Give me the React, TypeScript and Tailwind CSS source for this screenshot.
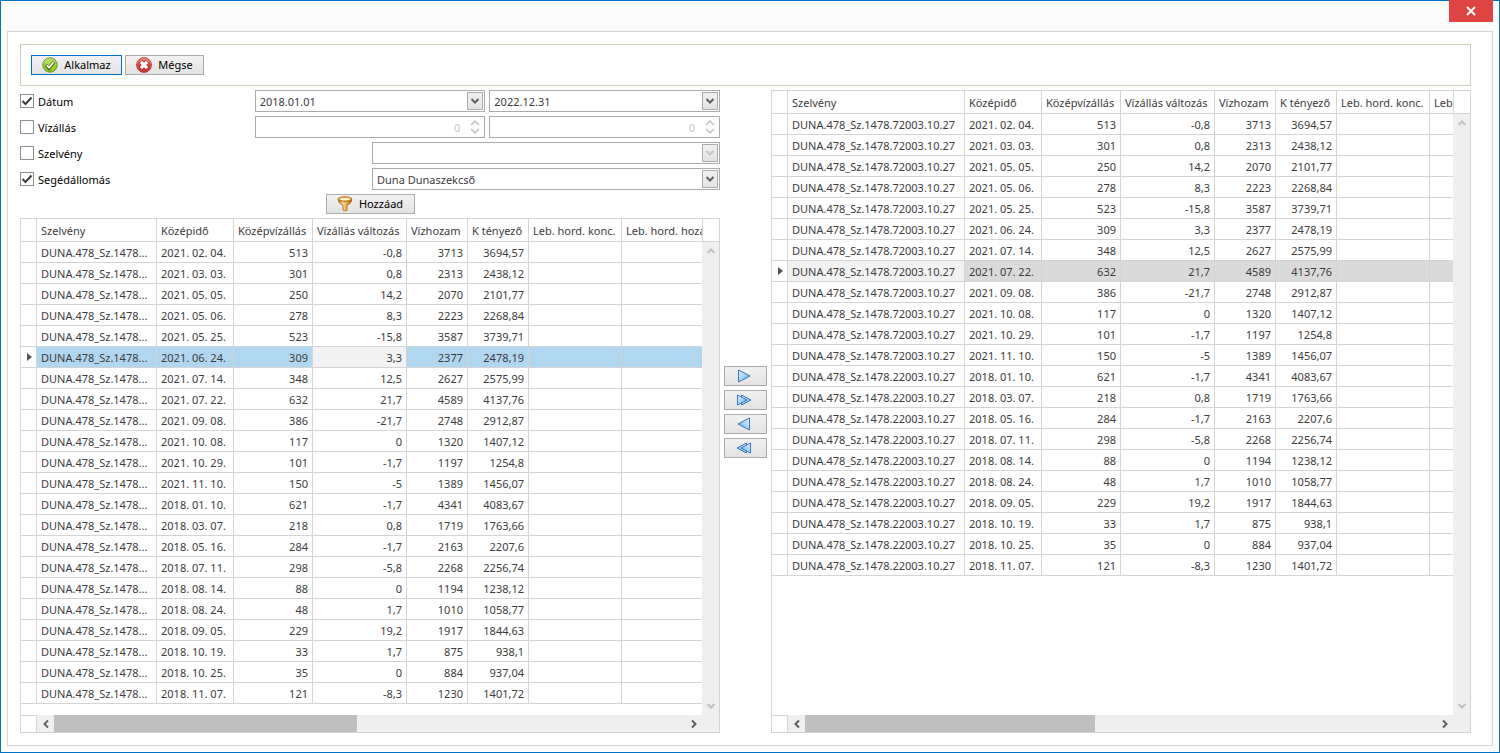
import { useState } from 'react'
import type { ReactNode } from 'react'
import clsx from 'clsx'

interface Measurement {
  station: string
  date: string
  level: string
  change: string
  flow: string
  factor: string
}

const OLD_STATION = 'DUNA.478_Sz.1478.22003.10.27'
const NEW_STATION = 'DUNA.478_Sz.1478.72003.10.27'

const HEADERS = [
  'Szelvény',
  'Középidő',
  'Középvízállás',
  'Vízállás változás',
  'Vízhozam',
  'K tényező',
  'Leb. hord. konc.',
  'Leb. hord. hozam',
]

const ROWS: Measurement[] = [
  ['2021. 02. 04.', '513', '-0,8', '3713', '3694,57'],
  ['2021. 03. 03.', '301', '0,8', '2313', '2438,12'],
  ['2021. 05. 05.', '250', '14,2', '2070', '2101,77'],
  ['2021. 05. 06.', '278', '8,3', '2223', '2268,84'],
  ['2021. 05. 25.', '523', '-15,8', '3587', '3739,71'],
  ['2021. 06. 24.', '309', '3,3', '2377', '2478,19'],
  ['2021. 07. 14.', '348', '12,5', '2627', '2575,99'],
  ['2021. 07. 22.', '632', '21,7', '4589', '4137,76'],
  ['2021. 09. 08.', '386', '-21,7', '2748', '2912,87'],
  ['2021. 10. 08.', '117', '0', '1320', '1407,12'],
  ['2021. 10. 29.', '101', '-1,7', '1197', '1254,8'],
  ['2021. 11. 10.', '150', '-5', '1389', '1456,07'],
  ['2018. 01. 10.', '621', '-1,7', '4341', '4083,67'],
  ['2018. 03. 07.', '218', '0,8', '1719', '1763,66'],
  ['2018. 05. 16.', '284', '-1,7', '2163', '2207,6'],
  ['2018. 07. 11.', '298', '-5,8', '2268', '2256,74'],
  ['2018. 08. 14.', '88', '0', '1194', '1238,12'],
  ['2018. 08. 24.', '48', '1,7', '1010', '1058,77'],
  ['2018. 09. 05.', '229', '19,2', '1917', '1844,63'],
  ['2018. 10. 19.', '33', '1,7', '875', '938,1'],
  ['2018. 10. 25.', '35', '0', '884', '937,04'],
  ['2018. 11. 07.', '121', '-8,3', '1230', '1401,72'],
].map(([date, level, change, flow, factor]) => ({
  station: date.startsWith('2021') ? NEW_STATION : OLD_STATION,
  date,
  level,
  change,
  flow,
  factor,
}))

const ROTATION = {
  up: 'rotate-180',
  down: '',
  left: 'rotate-90',
  right: '-rotate-90',
}

function Chevron({ dir }: { dir: keyof typeof ROTATION }) {
  return (
    <svg viewBox="0 0 10 10" className={clsx('size-[10px] shrink-0', ROTATION[dir])} aria-hidden="true">
      <path d="M1.5 3 L5 6.5 L8.5 3" fill="none" stroke="currentColor" strokeWidth="2" />
    </svg>
  )
}

function SpinIcon() {
  return (
    <svg viewBox="0 0 10 14" className="h-[14px] w-[10px] shrink-0" aria-hidden="true">
      <path d="M1 5 L5 1.2 L9 5 M1 9 L5 12.8 L9 9" fill="none" stroke="currentColor" strokeWidth="1.6" />
    </svg>
  )
}

function OkIcon() {
  return (
    <svg viewBox="0 0 16 16" className="size-4 shrink-0" aria-hidden="true">
      <defs>
        <linearGradient id="ok-fill" x1="0" y1="0" x2="0" y2="1">
          <stop offset="0" stopColor="#c3e27a" />
          <stop offset="0.5" stopColor="#a4d63c" />
          <stop offset="1" stopColor="#8cc62a" />
        </linearGradient>
      </defs>
      <circle cx="8" cy="8" r="7.2" fill="url(#ok-fill)" stroke="#64962a" />
      <path d="M3.8 8 L7 11.2 L12 4.8" fill="none" stroke="#4b7a12" strokeWidth="3.6" />
      <path d="M4.6 8.3 L7.1 10.5 L11.5 5.2" fill="none" stroke="#fff" strokeWidth="1.8" />
    </svg>
  )
}

function CancelIcon() {
  return (
    <svg viewBox="0 0 16 16" className="size-4 shrink-0" aria-hidden="true">
      <defs>
        <linearGradient id="cancel-fill" x1="0" y1="0" x2="0" y2="1">
          <stop offset="0" stopColor="#ee9a90" />
          <stop offset="0.5" stopColor="#da4a42" />
          <stop offset="1" stopColor="#c8302c" />
        </linearGradient>
      </defs>
      <circle cx="8" cy="8" r="7.4" fill="url(#cancel-fill)" stroke="#bb4640" />
      <path d="M4.6 4.6 L11.4 11.4 M11.4 4.6 L4.6 11.4" stroke="#a82a26" strokeWidth="4.6" />
      <path d="M4.9 4.9 L11.1 11.1 M11.1 4.9 L4.9 11.1" stroke="#fff" strokeWidth="3.2" />
    </svg>
  )
}

function FunnelIcon() {
  return (
    <svg viewBox="0 0 16 16" className="size-4 shrink-0" aria-hidden="true">
      <defs>
        <linearGradient id="funnel-fill" x1="0" y1="0" x2="1" y2="0">
          <stop offset="0" stopColor="#b8681c" />
          <stop offset="0.35" stopColor="#ffdf9c" />
          <stop offset="0.65" stopColor="#eda136" />
          <stop offset="1" stopColor="#a75712" />
        </linearGradient>
      </defs>
      <path d="M1.2 3 C1.2 6.5 3.5 8 6 9.2 V14.2 Q8 15.6 10 14.2 V9.2 C12.5 8 14.8 6.5 14.8 3 Z" fill="url(#funnel-fill)" stroke="#a45f1d" strokeWidth="0.8" />
      <ellipse cx="8" cy="3" rx="6.8" ry="2.3" fill="#f2b554" stroke="#a45f1d" strokeWidth="0.8" />
      <ellipse cx="8" cy="3.1" rx="4.8" ry="1.2" fill="#fff0cc" />
    </svg>
  )
}

function ArrowIcon({ double = false, back = false }: { double?: boolean; back?: boolean }) {
  const id = `arrow-${double}-${back}`
  return (
    <svg viewBox="0 0 16 16" className={clsx('size-4 shrink-0', back && '-scale-x-100')} aria-hidden="true">
      <defs>
        <linearGradient id={id} x1="0" y1="0" x2="1" y2="1">
          <stop offset="0" stopColor="#e8f5ff" />
          <stop offset="0.6" stopColor="#8ecbf5" />
          <stop offset="1" stopColor="#5aa6e6" />
        </linearGradient>
      </defs>
      {double ? (
        <g fill={`url(#${id})`} stroke="#3f76bf">
          <path d="M5.5 3 L15 8 L5.5 13 Z" />
          <path d="M1.5 3 L11 8 L1.5 13 Z" />
        </g>
      ) : (
        <path d="M2.5 2 L14 8 L2.5 14 Z" fill={`url(#${id})`} stroke="#3f76bf" />
      )}
    </svg>
  )
}

const BUTTON = 'flex h-5 items-center justify-center gap-[6px] border bg-linear-to-b from-[#f1f1f1] to-[#e3e3e3] text-black hover:to-[#d8d8d8]'

function DropBox({ disabled = false }: { disabled?: boolean }) {
  return (
    <span className={clsx(
      'flex h-[18px] w-4 shrink-0 items-center justify-center border border-[#ababab] bg-linear-to-b from-[#f1f1f1] to-[#e3e3e3]',
      disabled ? 'text-[#c4c4c4]' : 'text-[#606060]'
    )}>
      <Chevron dir="down" />
    </span>
  )
}

const FIELD = 'flex h-[22px] min-w-0 items-center border border-[#ababab] bg-white p-px'

function DateField({ label, value }: { label: string; value: string }) {
  return (
    <div className={FIELD}>
      <input aria-label={label} defaultValue={value} className="min-w-0 flex-1 pt-[2px] pl-[3px] outline-none" />
      <button type="button" aria-label={`${label} naptár`}><DropBox /></button>
    </div>
  )
}

function NumberField({ label, enabled }: { label: string; enabled: boolean }) {
  return (
    <div className={clsx(FIELD, 'gap-[10px] pr-1', !enabled && 'text-[#c4c4c4]')}>
      <input
        type="number"
        aria-label={label}
        defaultValue={0}
        disabled={!enabled}
        className="min-w-0 flex-1 appearance-none pt-[2px] text-right outline-none [-moz-appearance:textfield] [&::-webkit-inner-spin-button]:appearance-none"
      />
      <SpinIcon />
    </div>
  )
}

function SelectField({ label, options, disabled = false }: { label: string; options: string[]; disabled?: boolean }) {
  return (
    <div className="relative">
      <select
        aria-label={label}
        disabled={disabled}
        className="block h-[22px] w-full appearance-none border border-[#ababab] bg-white pt-[2px] pr-5 pl-1 outline-none"
      >
        {options.map(o => <option key={o}>{o}</option>)}
      </select>
      <span className="pointer-events-none absolute top-[2px] right-[2px]"><DropBox disabled={disabled} /></span>
    </div>
  )
}

interface FilterRowProps {
  label: string
  checked: boolean
  onChange: (checked: boolean) => void
  wide?: boolean
  children: ReactNode
}

function FilterRow({ label, checked, onChange, wide = false, children }: FilterRowProps) {
  return (
    <div className={clsx('grid items-center gap-1', wide ? 'grid-cols-2' : 'grid-cols-3')}>
      <label className="flex items-center gap-1 text-black">
        <span className="grid size-[14px] place-items-center">
          <input
            type="checkbox"
            checked={checked}
            onChange={e => onChange(e.target.checked)}
            className="col-start-1 row-start-1 size-[14px] appearance-none border border-[#8f8f8f] bg-white"
          />
          {checked && (
            <svg viewBox="0 0 14 14" className="pointer-events-none col-start-1 row-start-1 size-[14px]" aria-hidden="true">
              <path d="M2.5 7 L5.5 10 L11.5 3.5" fill="none" stroke="#3c3c3c" strokeWidth="2" />
            </svg>
          )}
        </span>
        <span className="pt-[2px]">{label}</span>
      </label>
      {children}
    </div>
  )
}

interface DataGridProps {
  label: string
  tableClass: string
  stationClass: string
  thumbClass: string
  initialRow: number
  focusCol: number
  selectedClass: string
  shortStation?: boolean
}

function DataGrid({ label, tableClass, stationClass, thumbClass, initialRow, focusCol, selectedClass, shortStation = false }: DataGridProps) {
  const [current, setCurrent] = useState(initialRow)

  return (
    <div className="flex min-w-0 flex-1 flex-col border border-[#d4d4d4]">
      <div className="flex flex-1">
        <div className="min-w-0 flex-1 overflow-hidden">
          <table aria-label={label} className={clsx('min-w-full table-fixed border-separate border-spacing-0', tableClass)}>
            <colgroup>
              <col className="w-4" />
              <col className={stationClass} />
              <col className="w-[77px]" />
              <col className="w-[79px]" />
              <col className="w-[94px]" />
              <col className="w-[61px]" />
              <col className="w-[61px]" />
              <col className="w-[93px]" />
              <col />
            </colgroup>
            <thead>
              <tr className="h-[23px]">
                <th className="border-r border-b border-[#d4d4d4]" />
                {HEADERS.map(h => (
                  <th key={h} className="overflow-hidden border-r border-b border-[#d4d4d4] px-1 pt-[2px] text-left font-normal whitespace-nowrap">
                    {h}
                  </th>
                ))}
              </tr>
            </thead>
            <tbody>
              {ROWS.map((row, i) => {
                const selected = i === current
                const station = shortStation ? `${row.station.slice(0, 16)}...` : row.station
                const cells = [station, row.date, row.level, row.change, row.flow, row.factor, '', '']
                return (
                  <tr key={row.date} className="h-[21px]" onClick={() => setCurrent(i)}>
                    <td className="border-r border-b border-[#d4d4d4]">
                      {selected && (
                        <svg viewBox="0 0 6 8" className="mx-auto h-2 w-[6px]" aria-hidden="true">
                          <path d="M1 0 L6 4 L1 8 Z" fill="#555" />
                        </svg>
                      )}
                    </td>
                    {cells.map((value, c) => (
                      <td
                        key={c}
                        className={clsx(
                          'overflow-hidden border-r border-b border-[#d4d4d4] px-1 pt-[2px] whitespace-nowrap',
                          c > 1 && 'text-right',
                          selected && (c === focusCol ? 'bg-[#f2f2f2]' : selectedClass)
                        )}
                      >
                        {value}
                      </td>
                    ))}
                  </tr>
                )
              })}
            </tbody>
          </table>
        </div>
        <div className="flex w-[17px] shrink-0 flex-col">
          <div className="h-[23px] border-b border-l border-[#d4d4d4]" />
          <div className="flex flex-1 flex-col items-center justify-between bg-[#efefef] py-1 text-[#c0c0c0]">
            <Chevron dir="up" />
            <Chevron dir="down" />
          </div>
        </div>
      </div>
      {/* Horizontal scrollbar */}
      <div className="flex h-[17px] bg-[#efefef] text-[#606060]">
        <div className="w-4 border-t border-r border-[#d4d4d4] bg-white" />
        <div className="flex w-[17px] items-center justify-center"><Chevron dir="left" /></div>
        <div className="flex-1"><div className={clsx('h-full bg-[#bfbfbf]', thumbClass)} /></div>
        <div className="mr-[17px] flex w-[17px] items-center justify-center"><Chevron dir="right" /></div>
      </div>
    </div>
  )
}

const MOVES = [
  { label: 'Kijelölt hozzáadása', icon: <ArrowIcon /> },
  { label: 'Összes hozzáadása', icon: <ArrowIcon double /> },
  { label: 'Kijelölt eltávolítása', icon: <ArrowIcon back /> },
  { label: 'Összes eltávolítása', icon: <ArrowIcon double back /> },
]

export default function App() {
  const [filters, setFilters] = useState({ date: true, level: false, section: false, station: true })
  const toggle = (key: keyof typeof filters) => (checked: boolean) => setFilters({ ...filters, [key]: checked })

  return (
    <div className="flex min-h-screen flex-col border border-[#0072c6] bg-[#fcfcfc] px-[6px] pb-[6px] font-['Noto_Sans','Open_Sans',sans-serif] text-[11px] leading-4 text-[#3c3c3c]">
      {/* Title bar */}
      <header className="flex h-[30px] items-start justify-end">
        <button type="button" aria-label="Bezárás" className="-mt-px flex h-[22px] w-11 items-center justify-center bg-[#e04343] text-white">
          <svg viewBox="0 0 10 10" className="size-[10px]" aria-hidden="true">
            <path d="M1 1 L9 9 M9 1 L1 9" stroke="currentColor" strokeWidth="2" />
          </svg>
        </button>
      </header>

      <main className="flex flex-1 flex-col gap-1 border border-[#d4d4d4] bg-white py-3 pr-[21px] pl-3">
        <div className="flex gap-[3px] border border-[#ceceb9] p-[10px]">
          <button type="button" className={clsx(BUTTON, 'w-[91px] border-[#0072c6]')}><OkIcon />Alkalmaz</button>
          <button type="button" className={clsx(BUTTON, 'w-[79px] border-[#ababab]')}><CancelIcon />Mégse</button>
        </div>

        <div className="grid flex-1 grid-cols-[minmax(0,1fr)_43px_minmax(0,1fr)] gap-1">
          <section className="flex flex-col gap-1">
            <FilterRow label="Dátum" checked={filters.date} onChange={toggle('date')}>
              <DateField label="Dátum kezdete" value="2018.01.01" />
              <DateField label="Dátum vége" value="2022.12.31" />
            </FilterRow>
            <FilterRow label="Vízállás" checked={filters.level} onChange={toggle('level')}>
              <NumberField label="Vízállás minimum" enabled={filters.level} />
              <NumberField label="Vízállás maximum" enabled={filters.level} />
            </FilterRow>
            <FilterRow wide label="Szelvény" checked={filters.section} onChange={toggle('section')}>
              <SelectField label="Szelvény választó" options={['']} disabled={!filters.section} />
            </FilterRow>
            <FilterRow wide label="Segédállomás" checked={filters.station} onChange={toggle('station')}>
              <SelectField label="Segédállomás választó" options={['Duna Dunaszekcső']} disabled={!filters.station} />
            </FilterRow>
            <button type="button" className={clsx(BUTTON, 'w-[89px] self-center border-[#ababab]')}><FunnelIcon />Hozzáad</button>
            <DataGrid
              label="Elérhető mérések"
              tableClass="w-[701px]"
              stationClass="w-[120px]"
              thumbClass="w-[48%]"
              initialRow={5}
              focusCol={3}
              selectedClass="bg-[#b1d6f0]"
              shortStation
            />
          </section>

          <div className="flex flex-col justify-center gap-1">
            {MOVES.map(m => (
              <button key={m.label} type="button" aria-label={m.label} className={clsx(BUTTON, 'border-[#ababab] pr-1')}>
                {m.icon}
              </button>
            ))}
          </div>

          <DataGrid
            label="Kiválasztott mérések"
            tableClass="w-[758px]"
            stationClass="w-[177px]"
            thumbClass="w-[46%]"
            initialRow={7}
            focusCol={0}
            selectedClass="bg-[#dadada]"
          />
        </div>
      </main>
    </div>
  )
}
